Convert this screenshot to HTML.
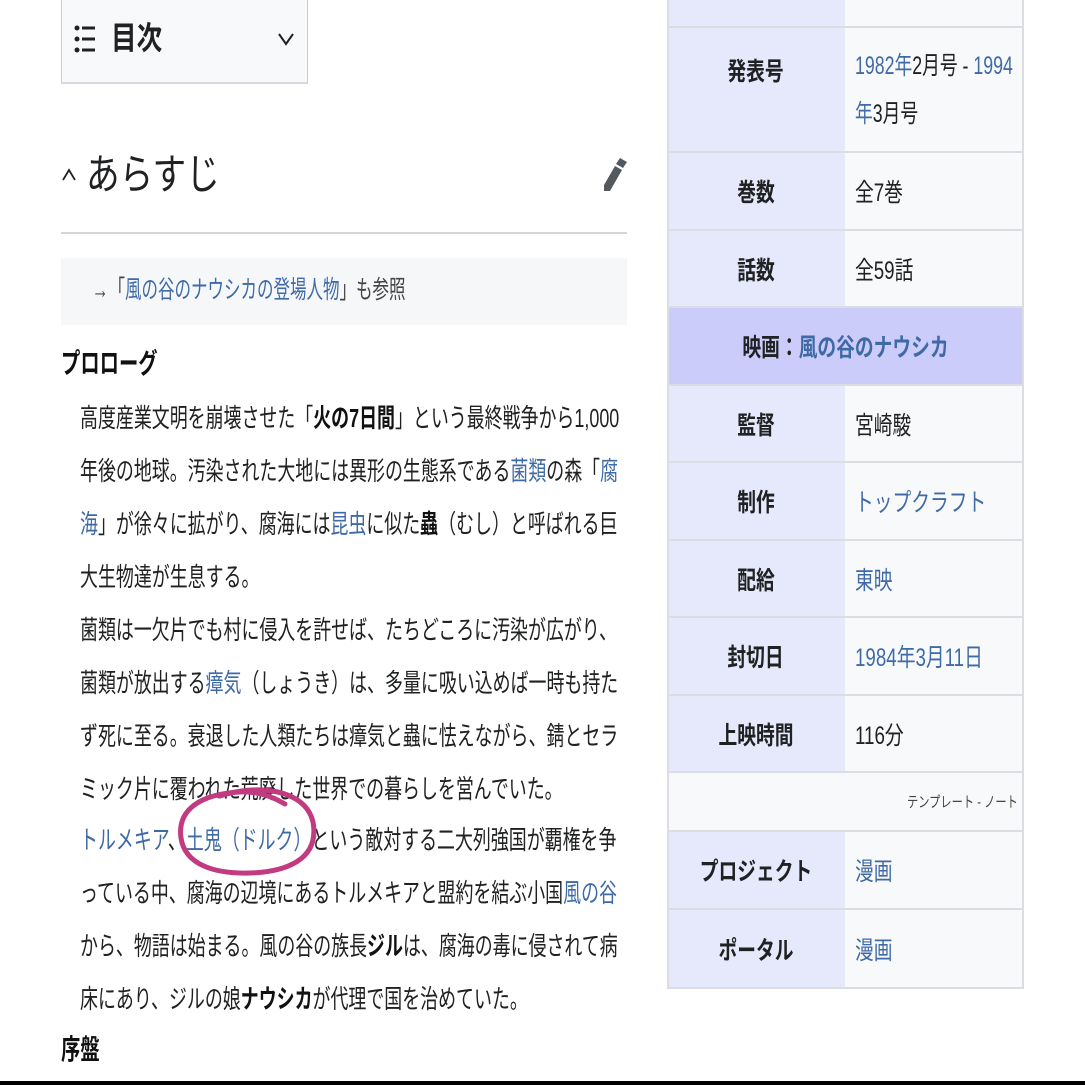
<!DOCTYPE html>
<html><head><meta charset="utf-8"><style>
body{margin:0;width:1085px;height:1085px;background:#fff;position:relative;overflow:hidden;font-family:"Liberation Sans","Noto Sans CJK JP",sans-serif;color:#202122}
.t{position:absolute;white-space:nowrap;font-size:26px;line-height:1;transform:scaleX(.69);transform-origin:0 0}
a{color:#3f6aa6;text-decoration:none}
b{font-weight:700;color:#111}
.ib{position:absolute;left:667px;width:357px;border-left:2px solid #dcdde2;border-right:2px solid #dcdde2;box-sizing:border-box}
.row{position:absolute;left:667px;width:357px;display:flex;border-bottom:2px solid #dcdde2;box-sizing:border-box}
.lab{flex:none;width:178px;background:#e6e9fb;display:flex;align-items:center;justify-content:center;font-weight:700;font-size:25px}
.val{flex:1;min-width:0;background:#f8f9fa;display:flex;align-items:center;padding-left:10px;font-size:25px;overflow:visible}
.sx{display:inline-block;transform:scaleX(.75);white-space:nowrap}
.val .sx{transform-origin:0 50%}
</style></head><body>
<div style="position:absolute;left:61px;top:-2px;width:247px;height:86px;background:#f8f9fa;border:1px solid #c8ccd1;border-top:none;box-sizing:border-box;border-bottom:2px solid #d6d8dc"></div>
<svg style="position:absolute;left:74px;top:25px" width="24" height="30" viewBox="0 0 24 30"><circle cx="3" cy="3" r="2.5" fill="#202122"/><circle cx="3" cy="14" r="2.5" fill="#202122"/><circle cx="3" cy="25" r="2.5" fill="#202122"/><rect x="8" y="1.5" width="13" height="3" fill="#202122"/><rect x="8" y="12.5" width="13" height="3" fill="#202122"/><rect x="8" y="23.5" width="13" height="3" fill="#202122"/></svg>
<div class="t" style="left:111px;top:22px;font-size:32px;font-weight:700;transform:scaleX(.8)">目次</div>
<svg style="position:absolute;left:277px;top:31px" width="18" height="16" viewBox="0 0 18 16"><path d="M2 3 L9 13 L16 3" fill="none" stroke="#202122" stroke-width="2"/></svg>
<svg style="position:absolute;left:61px;top:167px" width="16" height="14" viewBox="0 0 16 14"><path d="M2 13 L8 3 L14 13" fill="none" stroke="#202122" stroke-width="1.8"/></svg>
<div class="t" style="left:86px;top:154px;font-size:42px;transform:scaleX(.8)">あらすじ</div>
<svg style="position:absolute;left:603px;top:156px" width="26" height="38" viewBox="0 0 26 38"><path d="M17 2 L24 6 L20 12 L13 8 Z M12 10 L19 14 L7 35 L1 35 L1 29 Z" fill="#54595d"/></svg>
<div style="position:absolute;left:61px;top:232px;width:566px;height:2px;background:#d4d6d9"></div>
<div style="position:absolute;left:61px;top:258px;width:566px;height:67px;background:#f6f7f9"></div>
<div class="t" style="left:92px;top:278px;font-size:25px;color:#444;transform:scaleX(.66)">→「<a>風の谷のナウシカの登場人物</a>」も参照</div>
<div class="t" style="left:61px;top:350px;font-weight:700;font-size:28px;color:#111">プロローグ</div>
<div class="t" style="left:80px;top:405px">高度産業文明を崩壊させた「<b>火の7日間</b>」という最終戦争から1,000</div>
<div class="t" style="left:80px;top:458px">年後の地球。汚染された大地には異形の生態系である<a>菌類</a>の森「<a>腐</a></div>
<div class="t" style="left:80px;top:511px"><a>海</a>」が徐々に拡がり、腐海には<a>昆虫</a>に似た<b>蟲</b>（むし）と呼ばれる巨</div>
<div class="t" style="left:80px;top:564px">大生物達が生息する。</div>
<div class="t" style="left:80px;top:617px">菌類は一欠片でも村に侵入を許せば、たちどころに汚染が広がり、</div>
<div class="t" style="left:80px;top:670px">菌類が放出する<a>瘴気</a>（しょうき）は、多量に吸い込めば一時も持た</div>
<div class="t" style="left:80px;top:723px">ず死に至る。衰退した人類たちは瘴気と蟲に怯えながら、錆とセラ</div>
<div class="t" style="left:80px;top:776px">ミック片に覆われた荒廃した世界での暮らしを営んでいた。</div>
<div class="t" style="left:80px;top:827px"><a>トルメキア</a>、<a>土鬼（ドルク）</a>という敵対する二大列強国が覇権を争</div>
<div class="t" style="left:80px;top:880px">っている中、腐海の辺境にあるトルメキアと盟約を結ぶ小国<a>風の谷</a></div>
<div class="t" style="left:80px;top:933px">から、物語は始まる。風の谷の族長<b>ジル</b>は、腐海の毒に侵されて病</div>
<div class="t" style="left:80px;top:986px">床にあり、ジルの娘<b>ナウシカ</b>が代理で国を治めていた。</div>
<div class="t" style="left:61px;top:1036px;font-weight:700;font-size:28px;color:#111">序盤</div>
<svg style="position:absolute;left:170px;top:780px" width="160" height="110" viewBox="0 0 160 110"><path d="M50 16 C85 4 135 8 143 42 C150 80 115 92 80 93 C45 94 15 85 11 58 C7 30 30 14 70 12 C90 11 105 18 115 24" fill="none" stroke="#c23a80" stroke-width="5" stroke-linecap="round"/></svg>
<div class="row" style="top:-2px;height:30px"><div class="lab"></div><div class="val"></div></div>
<div class="row" style="top:28px;height:125px;align-items:stretch"><div class="lab" style="align-items:flex-start;padding-top:24px"><span class="sx">発表号</span></div><div class="val" style="align-items:flex-start;padding-top:14px;line-height:48px"><span class="sx" style="transform:scaleX(.71)"><a>1982年</a>2月号 - <a>1994</a><br><a>年</a>3月号</span></div></div>
<div class="row" style="top:153px;height:78px"><div class="lab"><span class="sx">巻数</span></div><div class="val"><span class="sx">全7巻</span></div></div>
<div class="row" style="top:231px;height:77px"><div class="lab"><span class="sx">話数</span></div><div class="val"><span class="sx">全59話</span></div></div>
<div class="row" style="top:308px;height:78px;background:#ccccfa;justify-content:center;align-items:center;font-weight:700;font-size:25px"><span class="sx">映画：<a>風の谷のナウシカ</a></span></div>
<div class="row" style="top:386px;height:77px"><div class="lab"><span class="sx">監督</span></div><div class="val"><span class="sx">宮崎駿</span></div></div>
<div class="row" style="top:463px;height:78px"><div class="lab"><span class="sx">制作</span></div><div class="val"><span class="sx"><a>トップクラフト</a></span></div></div>
<div class="row" style="top:541px;height:77px"><div class="lab"><span class="sx">配給</span></div><div class="val"><span class="sx"><a>東映</a></span></div></div>
<div class="row" style="top:618px;height:78px"><div class="lab"><span class="sx">封切日</span></div><div class="val"><span class="sx"><a>1984年3月11日</a></span></div></div>
<div class="row" style="top:696px;height:77px"><div class="lab"><span class="sx">上映時間</span></div><div class="val"><span class="sx">116分</span></div></div>
<div class="row" style="top:773px;height:59px;background:#f8f9fa;justify-content:flex-end;align-items:center;padding-right:6px;font-size:15px;color:#444"><span class="sx" style="transform-origin:100% 50%">テンプレート - ノート</span></div>
<div class="row" style="top:832px;height:78px"><div class="lab"><span class="sx">プロジェクト</span></div><div class="val"><span class="sx"><a>漫画</a></span></div></div>
<div class="row" style="top:910px;height:79px"><div class="lab"><span class="sx">ポータル</span></div><div class="val"><span class="sx"><a>漫画</a></span></div></div>
<div class="ib" style="top:0;height:989px;pointer-events:none"></div>
<div style="position:absolute;left:0;top:1081px;width:1085px;height:4px;background:#000"></div>
</body></html>
